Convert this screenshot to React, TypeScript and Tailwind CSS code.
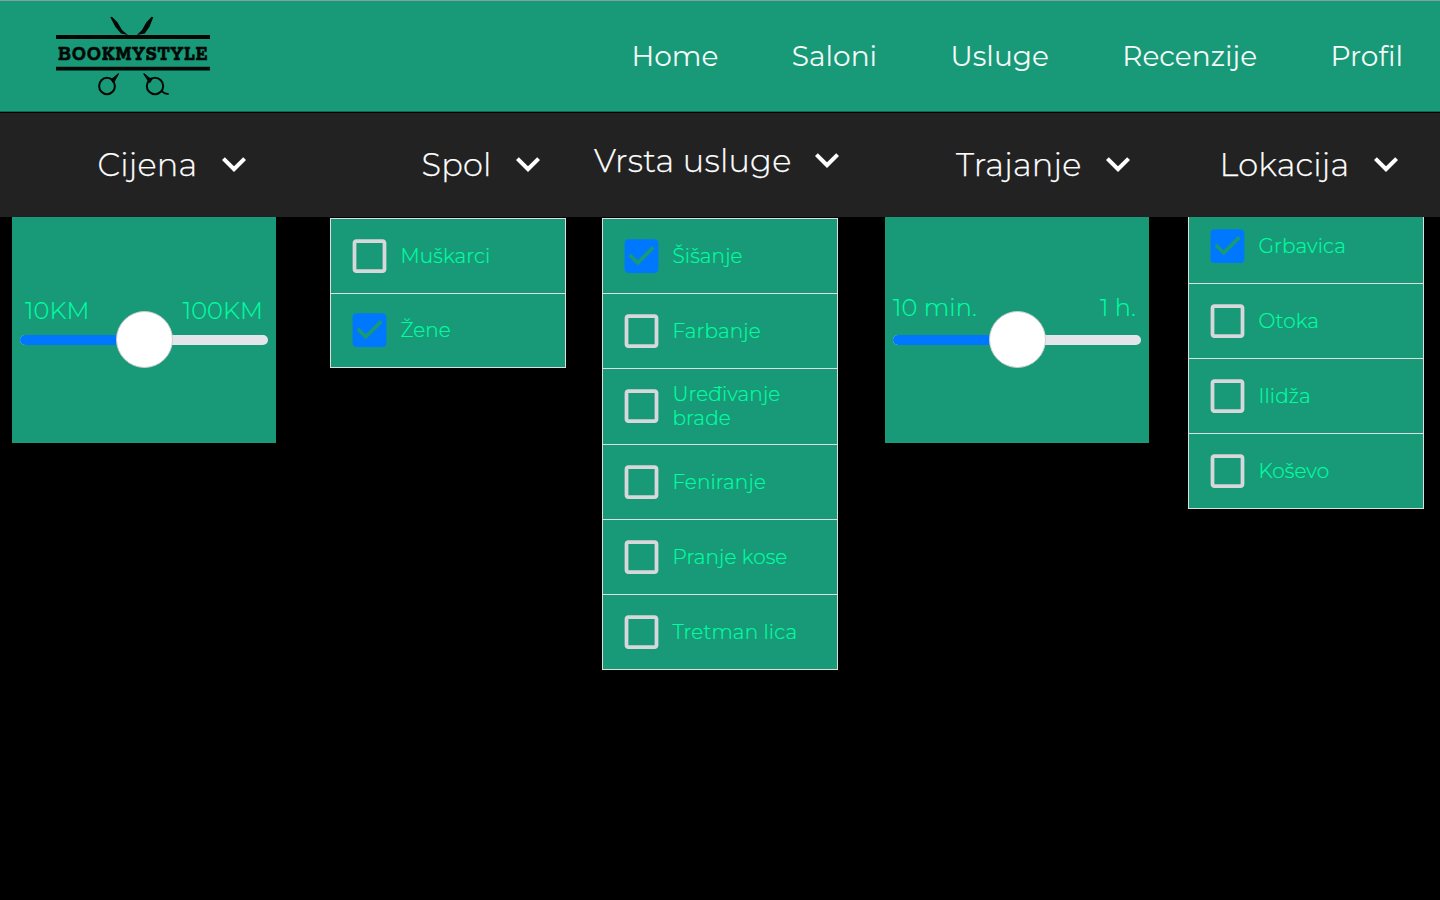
function Logo() {
  return (
    <svg className="ml-[50px] h-[112px] w-[177px] shrink-0" viewBox="50 0 177 112" fill="#030806">
      <path d="M56 35h154v4H56zM56 66.800h154v3.600H56z" />
      <path d="M110.300 17.300l1.700-.5 5.400 5.400 4.800 8 5.800 4.800-7-1.500-5.600-6.500zM153.300 17.300l-1.700-.5-5.200 5.400-4.600 8-5 4.800 8-1.500 4.600-6.500z" />
      <g fill="none" stroke="#030806">
        <ellipse cx="107" cy="86" rx="7.900" ry="8.200" strokeWidth="2" />
        <ellipse cx="155" cy="86" rx="8.200" ry="8.200" strokeWidth="2" />
        <path d="M162 91.500l3 2 3.700.6" strokeWidth="1.800" />
      </g>
      <path d="M118.500 73l.6.8-4.500 8-1.600 1.500-2.500-4 3-2zM144 73l-.8.800 4.800 7.700 2 1.800 2.600-4.300-3.600-1.800z" />
      <text
        transform="translate(58 59.500) scale(0.9 1)"
        fontFamily="Rokkitt, 'Roboto Slab', 'DejaVu Serif', serif"
        fontWeight="700"
        fontSize="22"
        textLength="166"
        lengthAdjust="spacing"
        stroke="#030806"
        strokeWidth="0.5"
      >
        BOOKMYSTYLE
      </text>
    </svg>
  );
}

function Chevron() {
  return (
    <svg className="size-12 shrink-0" viewBox="0 0 24 24" fill="#fff">
      <path d="M16.590 8.590 12 13.170 7.410 8.590 6 10l6 6 6-6z" />
    </svg>
  );
}

function Filter({ text, className }: { text: string; className: string }) {
  return (
    <div className={`flex h-12 items-center justify-between ${className}`}>
      <span className="mt-0.5 text-[32px] leading-[48px] font-light tracking-[0.2px] whitespace-nowrap [-webkit-text-stroke:0.25px_#fff]">
        {text}
      </span>
      <Chevron />
    </div>
  );
}

function Slider({ from, to, className, labels }: { from: string; to: string; className?: string; labels: string }) {
  return (
    <div className={`h-[226px] w-[264px] bg-[#189977] px-2 ${className ?? ""}`}>
      <div
        className={`flex h-[118px] items-end justify-between text-2xl leading-[30px] font-light tracking-[0.1px] text-[#00ffa3] [-webkit-text-stroke:0.15px_#00ffa3] ${labels}`}
      >
        <span>{from}</span>
        <span>{to}</span>
      </div>
      <div className="relative flex h-[10px] rounded-full bg-[#e2e5e9]">
        <div className="h-full w-1/2 rounded-l-full bg-[#0077ff]" />
        <div className="absolute top-[-24px] left-[96px] size-[57px] rounded-full border border-[#c9cfcc] bg-white" />
      </div>
    </div>
  );
}

type Item = { text: string; height: string; checked?: boolean };

function CheckList({ items, className }: { items: Item[]; className: string }) {
  return (
    <div className={`w-[236px] border border-[#dcdedf] bg-[#189977] ${className}`}>
      {items.map((item) => (
        <div key={item.text} className={`flex items-center border-b border-[#dcdedf] pl-4 last:border-b-0 ${item.height}`}>
          <svg className="size-[45px] shrink-0" viewBox="0 0.15 24 24">
            {item.checked ? (
              <path
                fill="#0077ff"
                d="M19 3H5c-1.110 0-2 .9-2 2v14c0 1.100.89 2 2 2h14c1.110 0 2-.9 2-2V5c0-1.100-.89-2-2-2zm-9 14l-5-5 1.410-1.410L10 14.170l7.590-7.590L19 8l-9 9z"
              />
            ) : (
              <path fill="#d6d8dc" d="M19 5v14H5V5h14m0-2H5c-1.100 0-2 .9-2 2v14c0 1.100.9 2 2 2h14c1.100 0 2-.9 2-2V5c0-1.100-.9-2-2-2z" />
            )}
          </svg>
          <span className="-mt-px w-[140px] pl-[8.500px] text-xl leading-6 font-light tracking-[0.12px] text-[#00ffa3] [-webkit-text-stroke:0.2px_#00ffa3]">
            {item.text}
          </span>
        </div>
      ))}
    </div>
  );
}

export default function App() {
  return (
    <div className="h-[900px] w-[1440px] overflow-hidden bg-black font-['Montserrat','Inter',sans-serif]">
      <header className="flex h-[112px] items-center justify-between border-t border-b border-t-[#7fa398] border-b-[#0f6850] bg-[#189977] pr-[37px]">
        <Logo />
        <nav className="flex gap-[73.4px] text-[28px] leading-9 text-[#f3faf7]">
          <span>Home</span>
          <span>Saloni</span>
          <span>Usluge</span>
          <span>Recenzije</span>
          <span>Profil</span>
        </nav>
      </header>
      <div className="relative z-10 flex h-[105px] border-t border-black bg-[#222222] pt-[27px] text-white">
        <Filter text="Cijena" className="ml-[97.5px] w-[160.5px]" />
        <Filter text="Spol" className="ml-[163.5px] w-[130.5px]" />
        <Filter text="Vrsta usluge" className="-mt-1 ml-[42px] w-[257px]" />
        <Filter text="Trajanje" className="ml-[105px] w-[186px]" />
        <Filter text="Lokacija" className="ml-[77.5px] w-[190.5px]" />
      </div>
      <main className="flex items-start pl-3">
        <Slider from="10KM" to="100KM" labels="px-[5px] pb-[9px]" />
        <CheckList
          className="mt-px ml-[54px]"
          items={[
            { text: "Muškarci", height: "h-[75px]" },
            { text: "Žene", height: "h-[73px]", checked: true },
          ]}
        />
        <CheckList
          className="mt-px ml-9"
          items={[
            { text: "Šišanje", height: "h-[75px]", checked: true },
            { text: "Farbanje", height: "h-[75px]" },
            { text: "Uređivanje brade", height: "h-[76px]" },
            { text: "Feniranje", height: "h-[75px]" },
            { text: "Pranje kose", height: "h-[75px]" },
            { text: "Tretman lica", height: "h-[74px]" },
          ]}
        />
        <Slider from="10 min." to="1 h." className="ml-[47px]" labels="pr-[5px] pb-3" />
        <CheckList
          className="-mt-[9px] ml-[39px]"
          items={[
            { text: "Grbavica", height: "h-[75px]", checked: true },
            { text: "Otoka", height: "h-[75px]" },
            { text: "Ilidža", height: "h-[75px]" },
            { text: "Koševo", height: "h-[74px]" },
          ]}
        />
      </main>
    </div>
  );
}
